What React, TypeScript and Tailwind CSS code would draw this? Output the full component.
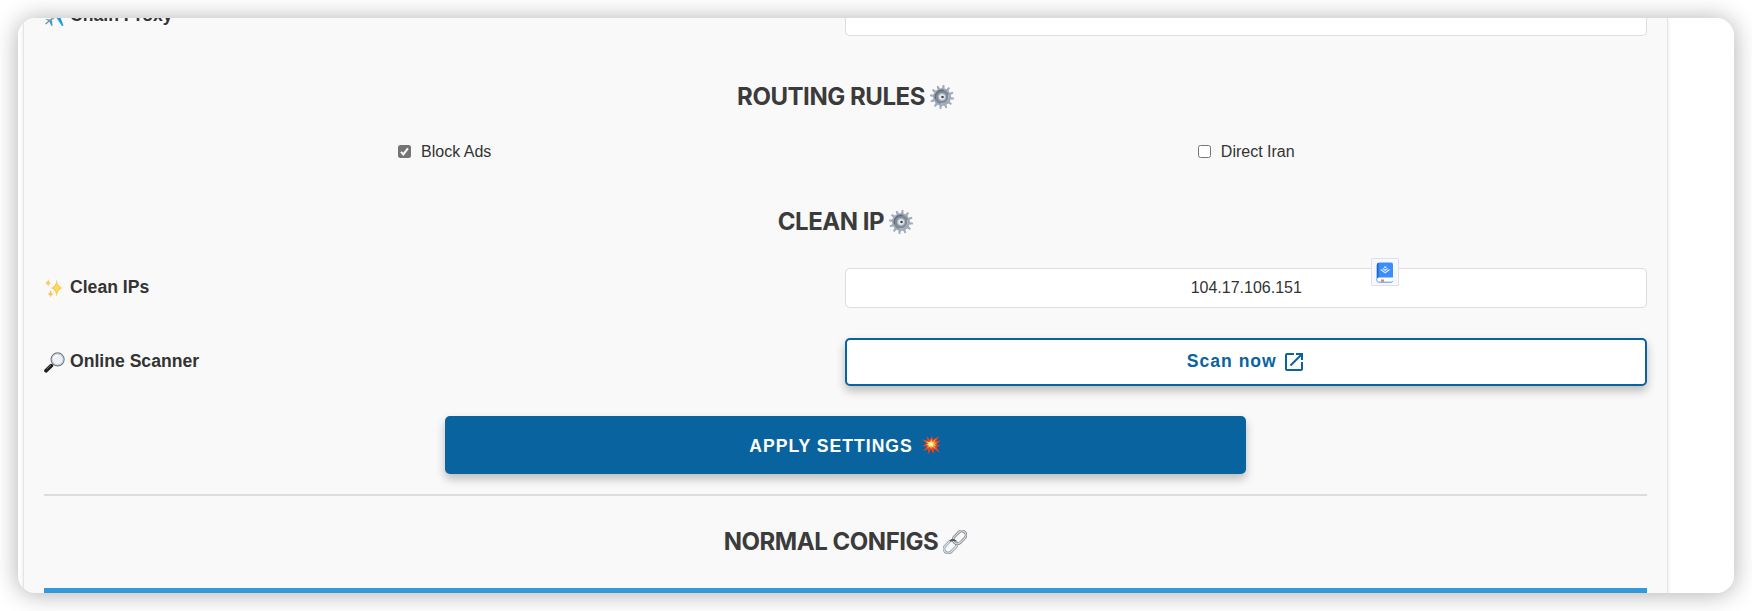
import React from "react";

const TEETH = [0, 30, 60, 90, 120, 150, 180, 210, 240, 270, 300, 330];

function Gear() {
  return (
    <svg viewBox="0 0 24 24" className="size-6 shrink-0">
      <g fill="#a3adba">
        {TEETH.map((a) => (
          <path key={a} d="M10.6 4.500 11.100.1q.9-.4 1.800 0l.5 4.400z" transform={`rotate(${a + 8} 12 12)`} />
        ))}
      </g>
      <circle cx="12" cy="12" r="9" fill="#a0abb8" />
      <circle cx="12" cy="12" r="7.300" fill="#7f8a96" />
      <path d="M5.600 14a6.700 6.700 0 0 1 8-8.500" fill="none" stroke="#666f79" strokeWidth="1.300" />
      <path d="M18.400 10a6.700 6.700 0 0 1-8 8.500" fill="none" stroke="#a9b5c3" strokeWidth="1.300" />
      <circle cx="12" cy="12" r="4" fill="#b3bbc4" />
      <circle cx="12" cy="12" r="2.800" fill="#eceff1" />
      <circle cx="12.500" cy="12" r="1.300" fill="#3d4650" />
    </svg>
  );
}

function Link() {
  return (
    <svg viewBox="0 0 24 24" className="size-6 shrink-0" fill="none">
      <g transform="rotate(-45 12 12)">
        <rect x="-1.800" y="7.800" width="14.600" height="8.400" rx="4.200" stroke="#7d868e" strokeWidth="2.600" />
        <rect x="-1.800" y="7.800" width="14.600" height="8.400" rx="4.200" stroke="#d3e3ec" strokeWidth="1.500" />
        <rect x="11.200" y="7.800" width="14.600" height="8.400" rx="4.200" stroke="#737479" strokeWidth="2.600" />
        <rect x="11.200" y="7.800" width="14.600" height="8.400" rx="4.200" stroke="#d9dee1" strokeWidth="1.300" />
        <path d="M9 8h1a4 4 0 0 1 3 4" stroke="#4b4f57" strokeWidth="1.600" />
      </g>
    </svg>
  );
}

function Plane() {
  return (
    <svg viewBox="0 0 20 20" className="size-5 shrink-0">
      <path d="M1 5 6 4l9.500 5 4 10.500-1.500.5-6-9z" fill="#1e9bd7" />
      <path d="M18 1 6 11l3 3 6-6z" fill="#aebac3" />
      <path d="m1 13 4.500.5 2.500 1 .5 5.500-1.500-.5-1.500-4z" fill="#2b9ed3" />
      <path d="M8.500 12.500 1.500 18" stroke="#8d8f91" strokeWidth="1.500" />
    </svg>
  );
}

function Sparkles() {
  return (
    <svg viewBox="0 0 20 20" className="size-5 shrink-0">
      <path d="M12.700 1.200q.7 7.600 6 8.800-5.300 1.100-6 9-.8-7.900-6-9 5.200-1.200 6-8.800z" fill="#fcc94a" />
      <path d="M12.700 5q.5 4 3 5-2.500 1-3 5-.5-4-3-5 2.500-1 3-5z" fill="#fddb60" />
      <path d="M4.200 1q.4 3.300 2.800 3.900-2.400.6-2.800 3.900Q3.800 5.500 1 4.900 3.800 4.300 4.200 1z" fill="#fac95c" />
      <path d="M6.600 12q.4 3.300 2.900 3.900-2.500.6-2.900 3.900-.4-3.300-2.900-3.900 2.500-.6 2.900-3.900z" fill="#f9c25c" />
    </svg>
  );
}

function Magnifier() {
  return (
    <svg viewBox="0 0 21 21" className="size-[21px] shrink-0">
      <path d="m8.600 12.500-2 2" stroke="#777e86" strokeWidth="1.800" />
      <path d="m7.300 13.700-5.200 5" stroke="#1e1e20" strokeWidth="3.800" strokeLinecap="round" />
      <path d="m7 13-4.500 4.200" stroke="#888" strokeWidth=".8" />
      <circle cx="13.600" cy="7.400" r="6.500" fill="#e9edf1" stroke="#727b86" strokeWidth="1.200" />
      <circle cx="13.600" cy="7.400" r="5.400" fill="#eef1f5" stroke="#c0c8d2" strokeWidth=".9" />
      <path d="M10 6.500a4 4 0 0 1 3.500-3" stroke="#fff" strokeWidth="1.400" fill="none" />
    </svg>
  );
}

function Burst() {
  return (
    <svg viewBox="0 0 20 20" className="size-5 shrink-0">
      <path d="m.8 4 5.700 1.900-.7-4.700 3 3.600L11 .5l.9 4.300L18.200.9l-3 5.400 4.300-.7-3.600 3.700 3.300 1.800-3.700.6 3.300 6.300-5.600-4-.4 4.700-2.800-4.100-3.100 4.700.3-5.100-5.200 1.800 3.900-4.200-4.800-1.100 4.700-1.600z" fill="#e04525" />
      <path d="m3.600 5.200 4 2 1.300-1 1.700-2.500.7 2.900 3.500-2.800-1.400 3.600 2.800.1-2.100 2.100 1.200 1.100-1.700.8 1.200 2.500-3.400-1.800-1 1.700-1.600-2-2.500 1.200.7-2.500-2.700-1.300 2.700-.8z" fill="#fb9338" />
      <path d="m6 6.800 3.200.5 1.300-1.600.7 1.700 1.700-.2-.7 1.800 1.300.8-1.700.9-.2 1.300-1.800-.8-1.600.7-.1-1.600-2-.8 1.600-.7z" fill="#fff06a" />
      <circle cx="10.100" cy="9.200" r="1.500" fill="#fffbd5" />
    </svg>
  );
}

function OpenInNew() {
  return (
    <svg viewBox="0 0 24 24" className="size-6 shrink-0" fill="currentColor">
      <path d="M19 19H5V5h7V3H5a2 2 0 0 0-2 2v14a2 2 0 0 0 2 2h14c1.100 0 2-.9 2-2v-7h-2v7zM14 3v2h3.590l-9.830 9.830 1.410 1.410L19 6.410V10h2V3h-7z" />
    </svg>
  );
}

function TranslateBadge() {
  return (
    <div className="absolute left-[1353px] top-[240px] z-10 flex size-7 items-center justify-center rounded-[1px] border border-[#dfe1e6] bg-[#f7f8fb]">
      <svg viewBox="0 0 18 21" className="h-[21px] w-[18px]">
        <path d="M3.500.5H15a2 2 0 0 1 2 2V18H.8V3a2.500 2.500 0 0 1 2.700-2.500z" fill="#3a8dfb" />
        <path d="M.8 3A2.500 2.500 0 0 1 2.500.7V16L.8 18z" fill="#1c64d0" />
        <path d="M3 15.500h14v4H3a2 2 0 0 1 0-4z" fill="#fff" />
        <path d="M.8 17.500c0 2 1 2.700 2.200 2.700h12.500l1.300-1" fill="none" stroke="#4b99f5" strokeWidth="1" />
        <path d="M5 17.500h3v2.700l-1.500-.8-1.500.8z" fill="#f7727f" />
        <path d="m4.700 7.500 4.500 3.200 4.500-3.200M6.800 6.500l2.400 1.800 2.400-1.800M8 4.700l1.200.9 1.200-.9" fill="none" stroke="#d8ebff" strokeWidth="1.200" />
      </svg>
    </div>
  );
}

function Heading({ children, icon, className }: { children: React.ReactNode; icon: React.ReactNode; className: string }) {
  return (
    <h2 className={`flex h-8 items-center justify-center gap-[5px] font-[Inter,sans-serif] text-2xl font-bold leading-8 text-[#3b3b3b] ${className}`}>
      <span className="tracking-[-0.46px]">{children}</span>
      {icon}
    </h2>
  );
}

function Label({ icon, children }: { icon: React.ReactNode; children: React.ReactNode }) {
  return (
    <div className="flex items-center text-[17.6px] font-bold text-[#333]">
      <span className="flex w-[26px]">{icon}</span>
      <span className="pb-0.5">{children}</span>
    </div>
  );
}

function Check({ checked, children }: { checked?: boolean; children: React.ReactNode }) {
  return (
    <label className="flex items-center justify-center gap-[10px] text-base text-[#333]">
      {checked ? (
        <span className="flex size-[13px] items-center justify-center rounded-[2.5px] bg-[#757575]">
          <svg viewBox="0 0 13 13" className="size-[13px]">
            <path d="m3 6.900 2.300 2.500 4.600-6" fill="none" stroke="#fff" strokeWidth="2" />
          </svg>
        </span>
      ) : (
        <span className="size-[13px] rounded-[2.5px] border border-[#767676] bg-white" />
      )}
      <span className="pt-0.5 leading-[22px]">{children}</span>
    </label>
  );
}

export default function App() {
  return (
    <div className="h-[611px] w-[1752px] overflow-hidden bg-white p-[18px] font-['Liberation_Sans',Arial,sans-serif]">
      <div className="h-[575px] w-[1716px] rounded-[18px] shadow-[0_1px_25px_rgba(0,0,0,0.32)]">
        <div className="relative h-full overflow-hidden rounded-[18px] bg-white pl-[5px]">
          <main className="h-full w-[1645px] border-x border-[#e4e4e4] bg-[#f9f9f9] px-5 shadow-[0_2px_4px_rgba(0,0,0,0.1)]">
            <div className="grid h-[18px] grid-cols-2">
              <div className="-mt-4 h-[26px]">
                <Label icon={<Plane />}>Chain Proxy</Label>
              </div>
              <div className="-ml-px rounded-b-[5px] border border-t-0 border-[#ddd] bg-white" />
            </div>
            <Heading className="mt-[45px]" icon={<Gear />}>ROUTING RULES</Heading>
            <div className="mt-[26px] grid h-6 grid-cols-2">
              <Check checked>Block Ads</Check>
              <Check>Direct Iran</Check>
            </div>
            <Heading className="mt-[43px]" icon={<Gear />}>CLEAN IP</Heading>
            <div className="mt-[30px] grid h-10 grid-cols-2">
              <Label icon={<Sparkles />}>Clean IPs</Label>
              <div className="-ml-px flex items-center justify-center rounded-[5px] border border-[#ddd] bg-white pl-px text-base text-[#333]">
                104.17.106.151
              </div>
            </div>
            <div className="mt-[30px] grid h-12 grid-cols-2">
              <Label icon={<Magnifier />}>Online Scanner</Label>
              <button className="-ml-px flex items-center justify-center gap-[5px] rounded-[5px] border-2 border-[#09639f] bg-white pl-px text-[17.6px] font-bold tracking-[1px] text-[#09639f] shadow-[0_5px_10px_rgba(0,0,0,0.25)]">
                <span className="pb-0.5">Scan now</span>
                <OpenInNew />
              </button>
            </div>
            <button className="mx-auto mt-[30px] flex h-[58px] w-1/2 items-center justify-center gap-2 rounded-[5px] bg-[#09639f] pr-px text-[17.6px] font-bold tracking-[1px] text-white shadow-[0_5px_10px_rgba(0,0,0,0.25)]">
              <span className="pt-0.5">APPLY SETTINGS</span>
              <Burst />
            </button>
            <div className="mt-5 h-0.5 bg-[#ddd]" />
            <Heading className="mt-[30px]" icon={<Link />}>NORMAL CONFIGS</Heading>
            <div className="mt-[30px] h-[5px] bg-[#3498db]" />
          </main>
          <TranslateBadge />
        </div>
      </div>
    </div>
  );
}
